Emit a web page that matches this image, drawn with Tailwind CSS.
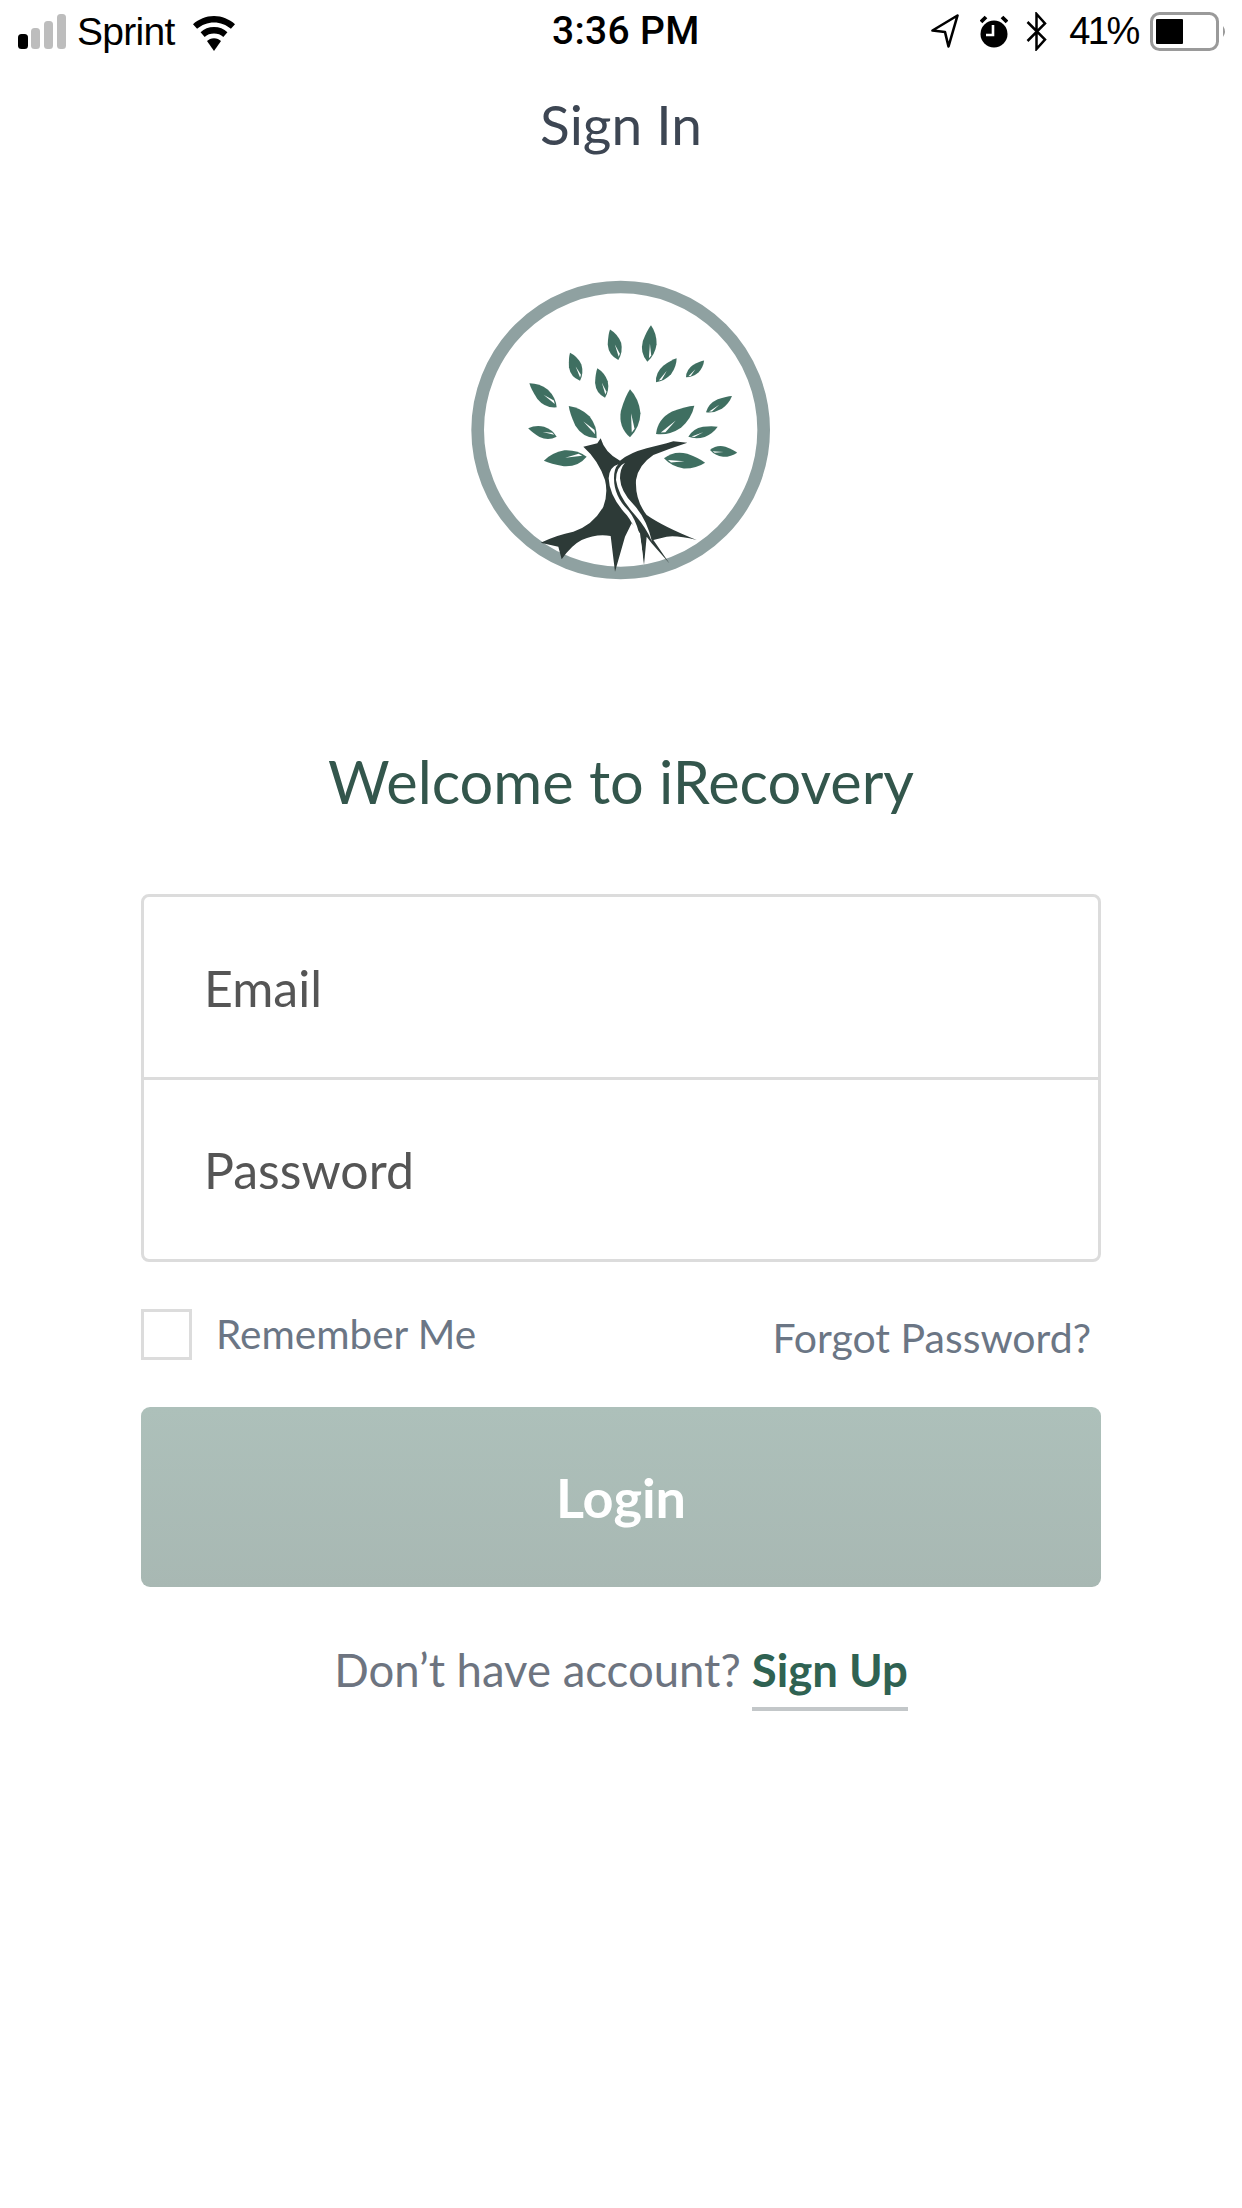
<!DOCTYPE html>
<html><head><meta charset="utf-8"><title>Sign In</title>
<script src="https://cdn.jsdelivr.net/npm/@tailwindcss/browser@4"></script></head>
<body class="bg-white">
<div class="w-[1242px] h-[2208px] bg-white flex flex-col font-['Lato','Open_Sans',sans-serif] overflow-hidden">
  <div class="h-[62px] flex items-center text-black font-['Liberation_Sans',sans-serif] leading-none">
    <div class="w-[552px] flex items-center pl-[18px]">
      <svg width="48" height="35" viewBox="0 0 48 35" class="mr-[11px]"><rect x="0" y="20" width="10" height="15" rx="3.500" fill="#000"/><rect x="13" y="14" width="9" height="21" rx="3.500" fill="#bdbdbd"/><rect x="26" y="7" width="9" height="28" rx="3.500" fill="#bdbdbd"/><rect x="39" y="0" width="9" height="35" rx="3.500" fill="#bdbdbd"/></svg>
      <span class="text-[39px] tracking-[-0.7px] font-['Liberation_Sans',sans-serif]">Sprint</span>
      <svg width="42" height="35" viewBox="0 0 36 30" class="ml-[18px] mt-[4px]"><path d="M18 0C11 0 5 2.700 0 7L3.500 11C7.500 7.500 12.500 5.500 18 5.500S28.500 7.500 32.500 11L36 7C31 2.700 25 0 18 0Z" fill="#000"/><path d="M18 9.500C13.500 9.500 9.500 11 6.500 14L10 18C12 16 15 15 18 15S24 16 26 18L29.500 14C26.500 11 22.500 9.500 18 9.500Z" fill="#000"/><path d="M18 19C15.500 19 13.500 20 12 21.500L18 30L24 21.500C22.500 20 20.500 19 18 19Z" fill="#000"/></svg>
    </div>
    <div class="font-medium text-[39px] tracking-[0.3px] whitespace-nowrap font-['Roboto',sans-serif]">3:36 PM</div>
    <div class="flex-1 flex items-center justify-end pr-[15px]">
      <svg width="28" height="34" viewBox="0 0 28 34" class="mr-[21px]"><path d="M26.500 1.500L1.500 16.500L14 18L17.500 32.500Z" fill="none" stroke="#000" stroke-width="2.600" stroke-linejoin="round"/></svg>
      <svg width="28" height="33" viewBox="0 0 28 33" class="mr-[18px]"><circle cx="14" cy="19" r="13.500" fill="#000"/><path d="M13 10V20H6" fill="none" stroke="#fff" stroke-width="2.600"/><path d="M1 7L6 2M27 7L22 2" stroke="#000" stroke-width="3.800"/></svg>
      <svg width="21" height="39" viewBox="0 0 21 39" class="mr-[22px]"><path d="M1.500 10L19 27.500L10.500 37V2L19 11.500L1.500 29" fill="none" stroke="#000" stroke-width="2.500"/></svg>
      <span class="whitespace-nowrap text-[38px] tracking-[-2.400px] mr-[12px]">41%</span>
      <svg width="77" height="39" viewBox="0 0 77 39"><rect x="1.500" y="1.500" width="66" height="36" rx="8" fill="none" stroke="#9a9a9a" stroke-width="3"/><rect x="6" y="7" width="27" height="25" rx="1" fill="#000"/><path d="M73 14Q77 19.500 73 25Z" fill="#9a9a9a"/></svg>
    </div>
  </div>
  <div class="text-center text-[55px] leading-[70px] mt-[27px] text-[#3d4653] font-normal">Sign In</div>
  <div class="h-[320px] mt-[111px] flex justify-center">
    <svg width="340" height="320" viewBox="0 0 1020 960" class="ml-[-2px]">
      <defs>
        <g id="leaf"><path d="M0 0Q22 -34 55 -26Q85 -14 100 0Q80 26 50 30Q20 28 0 0Z" fill="#3f6f61"/><path d="M10 5L50 3L18 13Z" fill="#fff"/></g>
      </defs>
      <circle cx="512" cy="480" r="429" fill="#fff" stroke="#8fa1a1" stroke-width="38"/>
      <use href="#leaf" transform="translate(505 270) rotate(-105.200) scale(.95 .72)"/>
      <use href="#leaf" transform="translate(592 275) rotate(-84.300) scale(1.100 .75)"/>
      <use href="#leaf" transform="translate(390 332) rotate(-109.700) scale(.89 .68)"/>
      <use href="#leaf" transform="translate(465 383) rotate(-104.600) scale(.91 .68)"/>
      <use href="#leaf" transform="translate(618 337) rotate(-49.300) scale(.95 .62)"/>
      <use href="#leaf" transform="translate(708 322) rotate(-42.800) scale(.74 .5)"/>
      <use href="#leaf" transform="translate(320 412) rotate(-138.700) scale(1.090 .75)"/>
      <use href="#leaf" transform="translate(540 502) rotate(-90) scale(1.440 1.050)"/>
      <use href="#leaf" transform="translate(440 505) rotate(-130.900) scale(1.280 .9)"/>
      <use href="#leaf" transform="translate(618 492) rotate(-36.500) scale(1.430 .98)"/>
      <use href="#leaf" transform="translate(768 427) rotate(-32.100) scale(.92 .55)"/>
      <use href="#leaf" transform="translate(320 500) rotate(-163.600) scale(.89 .6)"/>
      <use href="#leaf" transform="translate(715 500) rotate(-18.800) scale(.93 .55)"/>
      <use href="#leaf" transform="translate(410 560) rotate(174.600) scale(1.290 .85)"/>
      <use href="#leaf" transform="translate(642 565) rotate(6) scale(1.240 .8)"/>
      <use href="#leaf" transform="translate(780 540) rotate(5.600) scale(.82 .55)"/>
      <path d="M400 530L442 520L452 505Q465 550 510 572Q540 548 590 535L650 520L670 514L712 518Q660 535 610 555Q565 585 558 630Q555 690 590 735Q640 770 740 810Q680 795 650 800L610 810L658 880L605 820L590 800L582 885L570 790L545 760L525 800L495 905L482 798Q440 790 395 810Q365 825 335 868L325 830L272 818Q320 795 370 785Q430 765 460 710Q475 670 465 630Q445 570 400 530Z" fill="#2d3a37"/>
      <path d="M505 583Q478 590 476 625Q478 680 530 735Q570 785 580 890Q576 770 536 722Q492 680 492 625Q492 595 505 583Z" fill="#fff"/>
      <path d="M525 578Q498 590 498 630Q505 680 555 735Q590 775 606 815Q590 745 550 703Q512 665 510 625Q510 595 525 578Z" fill="#fff"/>
    </svg>
  </div>
  <div class="mt-[151px] text-center text-[59.500px] leading-[80px] text-[#33564c] font-normal">Welcome to iRecovery</div>
  <div class="mt-[73px] mx-[141px] h-[368px] border-[3px] border-[#dcdcdc] rounded-[8px] flex flex-col text-[50px] text-[#555555]">
    <div class="flex-1 flex items-center pl-[60px] pt-[3px] border-b-[3px] border-[#dcdcdc]">Email</div>
    <div class="flex-1 flex items-center pl-[60px] pt-[3px]">Password</div>
  </div>
  <div class="mt-[47px] mx-[141px] h-[51px] flex items-center text-[#6b7685] text-[40.500px]">
    <div class="w-[51px] h-[51px] border-[3px] border-[#dcdcdc] mr-[24px]"></div>
    <span>Remember Me</span>
    <span class="ml-auto mr-[10px] text-[41px] translate-y-[3px]">Forgot Password?</span>
  </div>
  <div class="mt-[47px] mx-[141px] h-[180px] rounded-[9px] bg-linear-to-b from-[#adc0ba] to-[#a8b8b3] flex items-center justify-center text-white text-[54px] font-bold">Login</div>
  <div class="mt-[48px] flex justify-center items-start text-[45.500px] leading-[70px] text-[#6d7480]">
    <span>Don’t have account?</span>
    <span class="ml-[11px] font-bold text-[#2f6252] border-b-[4px] border-[#c3c7c9] h-[76px]">Sign Up</span>
  </div>
</div>
</body></html>
